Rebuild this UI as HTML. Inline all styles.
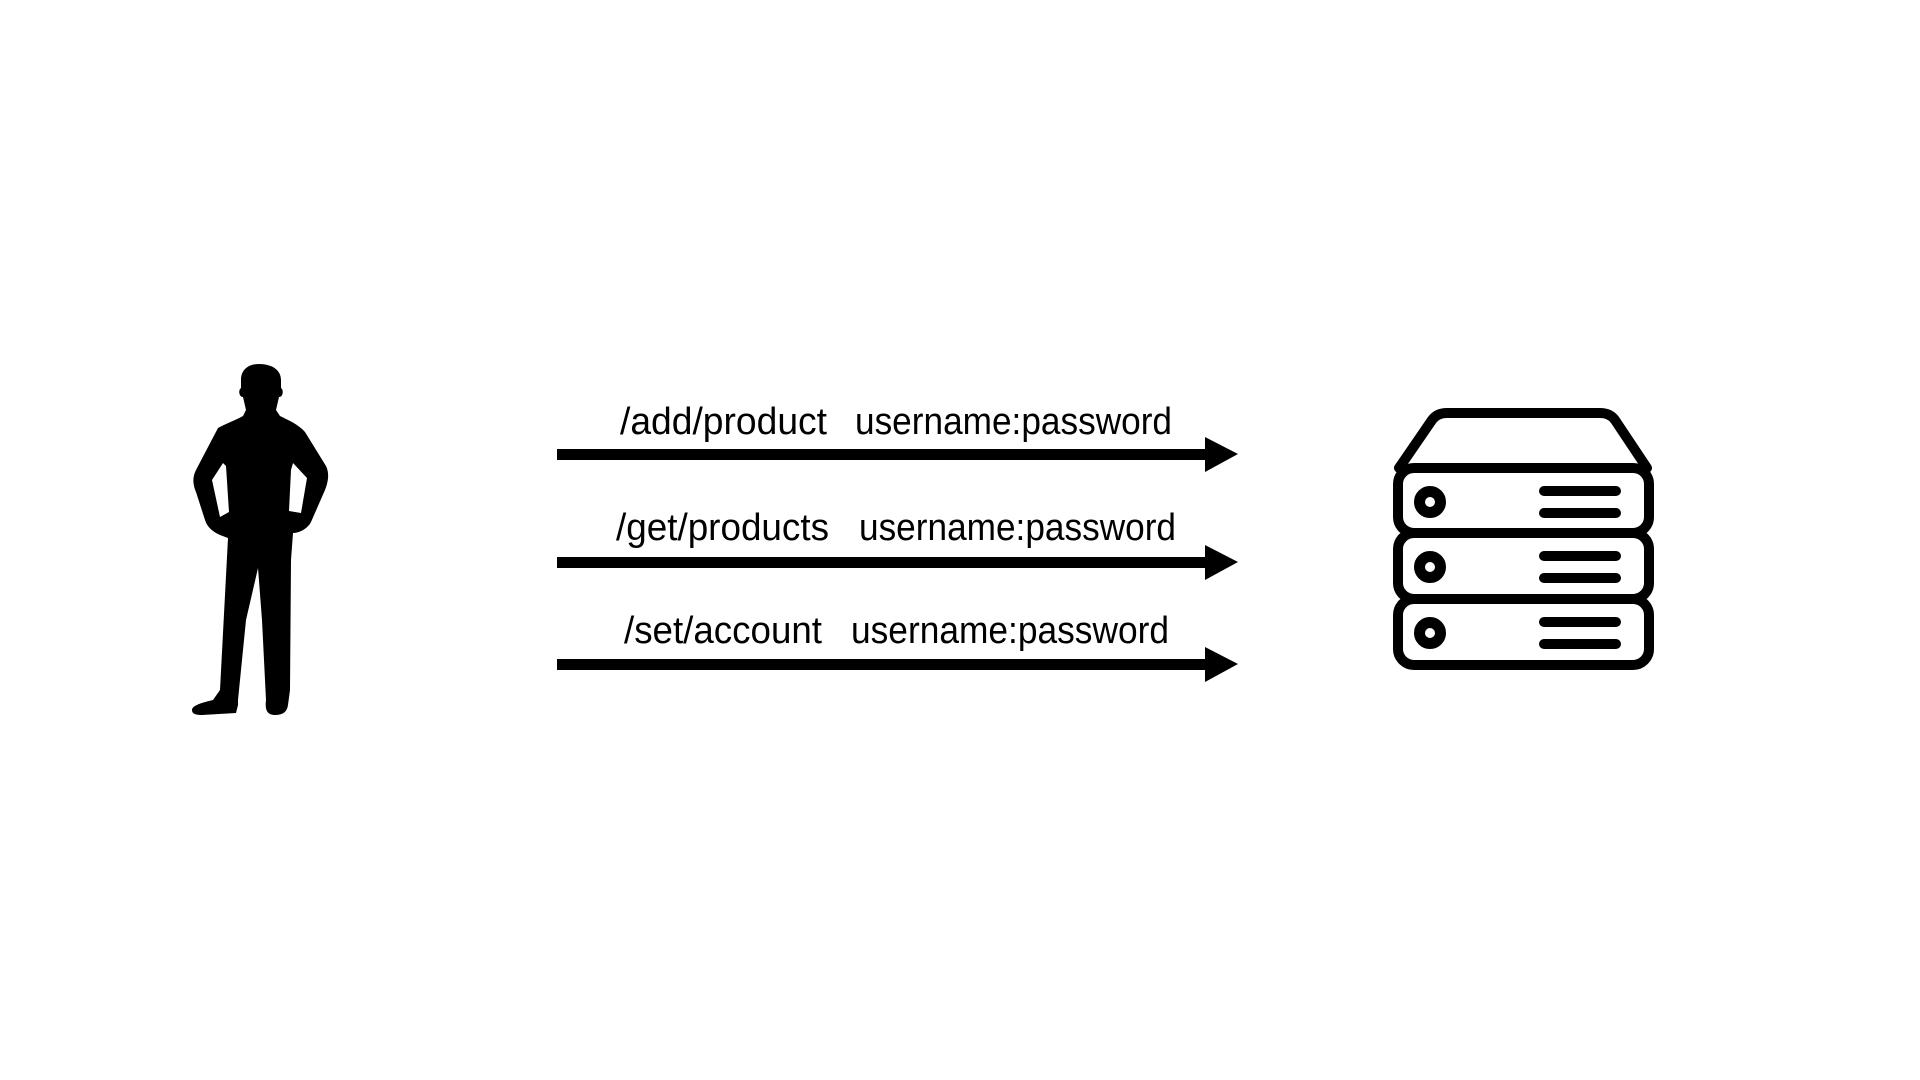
<!DOCTYPE html>
<html><head><meta charset="utf-8"><style>html,body{margin:0;padding:0;background:#fff;}svg{display:block}</style></head>
<body>
<svg width="1920" height="1080" viewBox="0 0 1920 1080" xmlns="http://www.w3.org/2000/svg">
<rect width="1920" height="1080" fill="#fff"/>
<path fill="#000" fill-rule="evenodd" d="M259,364 C248,364 241,370 241,380 L241,388 C238,390 239,397 243,397 L246,410 L243,416 C236,420 225,424 218,428 L196,470 C192,478 193,485 196,492 L205,520 C207,527 213,532 220,535 L228,538 L220,690 L213,700 C200,703 192,706 192,710 C192,714 196,715 202,715 L236,713 L238,705 L238,700 L246,620 L258,568 L262,620 L266,700 C265,708 266,715 275,715 C283,715 287,712 288,705 L290,690 L291,560 L293,533 C300,533 308,528 311,522 L325,490 C329,480 329,472 326,466 L305,432 C298,424 288,420 280,416 L276,410 L279,397 C283,397 284,390 281,388 L281,380 C281,370 272,364 259,364 Z M223,463 L212,480 L220,517 L229,512 L226,466 Z M293,463 L307,478 L301,513 L289,511 L291,470 Z"/>
<g fill="#000" font-family="'Liberation Sans', Arial, sans-serif" font-size="38">
<text x="620" y="434" textLength="207" lengthAdjust="spacingAndGlyphs">/add/product</text>
<text x="855" y="434" textLength="317" lengthAdjust="spacingAndGlyphs">username:password</text>
<text x="616" y="540" textLength="213" lengthAdjust="spacingAndGlyphs">/get/products</text>
<text x="859" y="540" textLength="317" lengthAdjust="spacingAndGlyphs">username:password</text>
<text x="624" y="643" textLength="198" lengthAdjust="spacingAndGlyphs">/set/account</text>
<text x="851" y="643" textLength="318" lengthAdjust="spacingAndGlyphs">username:password</text>
</g>
<g fill="#000">
<rect x="557" y="449" width="652" height="11"/><polygon points="1205,437 1238,454 1205,472"/>
<rect x="557" y="557" width="652" height="11"/><polygon points="1205,545 1238,562 1205,580"/>
<rect x="557" y="659" width="652" height="11"/><polygon points="1205,647 1238,664 1205,682"/>
</g>
<g fill="none" stroke="#000" stroke-width="10" stroke-linecap="round" stroke-linejoin="round">
<path d="M1399,468 L1432,420 Q1437,413 1447,413 L1600,413 Q1610,413 1615,420 L1647,468"/>
<rect x="1398" y="468" width="251" height="65" rx="16"/>
<rect x="1398" y="533" width="251" height="66" rx="16"/>
<rect x="1398" y="599" width="251" height="66" rx="16"/>
<circle cx="1430" cy="502" r="10.5" stroke-width="11"/>
<circle cx="1430" cy="567" r="10.5" stroke-width="11"/>
<circle cx="1430" cy="633" r="10.5" stroke-width="11"/>
<path d="M1544,491 H1616 M1544,513 H1616 M1544,556 H1616 M1544,578 H1616 M1544,622 H1616 M1544,644 H1616"/>
</g>
</svg>
</body></html>
